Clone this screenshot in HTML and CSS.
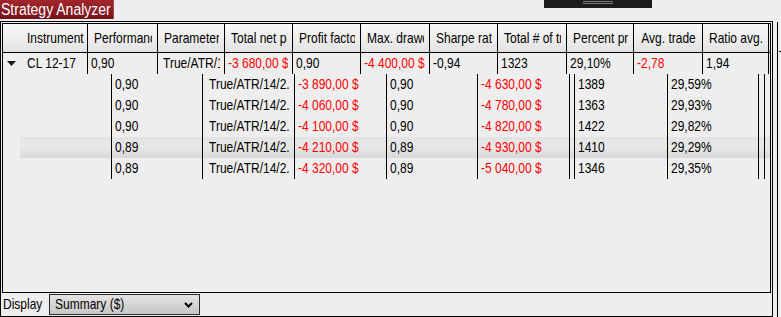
FILE: index.html
```html
<!DOCTYPE html>
<html>
<head>
<meta charset="utf-8">
<link rel="stylesheet" href="styles.css">
</head>
<body>
<div class="topbar">
  <div class="tab"><div class="tt">Strategy Analyzer</div></div>
  <div class="grip"><span></span><span></span></div>
</div>
<div class="main">
  <div class="panel">
    <div class="pane">
      <div class="head">
        <div class="c first"><div class="t">Instrument</div></div>
        <div class="c"><div class="t">Performance</div></div>
        <div class="c"><div class="t">Parameters</div></div>
        <div class="c"><div class="t">Total net profit</div></div>
        <div class="c"><div class="t">Profit factor</div></div>
        <div class="c"><div class="t">Max. drawdown</div></div>
        <div class="c"><div class="t">Sharpe ratio</div></div>
        <div class="c"><div class="t">Total # of trades</div></div>
        <div class="c"><div class="t">Percent profitable</div></div>
        <div class="c"><div class="t">Avg. trade</div></div>
        <div class="c"><div class="t">Ratio avg. win / avg. loss</div></div>
      </div>
      <div class="row1">
        <div class="c first"><svg class="tri" width="9" height="5" viewBox="0 0 9 5"><polygon points="0,0 9,0 4.5,5" fill="#1a1a1a"/></svg><div class="t">CL 12-17</div></div>
        <div class="c"><div class="t">0,90</div></div>
        <div class="c param"><div class="t">True/ATR/14/2.5/1</div></div>
        <div class="c"><div class="t neg">-3 680,00 $</div></div>
        <div class="c"><div class="t">0,90</div></div>
        <div class="c"><div class="t neg">-4 400,00 $</div></div>
        <div class="c"><div class="t">-0,94</div></div>
        <div class="c"><div class="t">1323</div></div>
        <div class="c"><div class="t">29,10%</div></div>
        <div class="c"><div class="t neg">-2,78</div></div>
        <div class="c"><div class="t">1,94</div></div>
      </div>
      <div class="kids">
        <div class="kid">
          <div class="c"></div>
          <div class="c"><div class="t">0,90</div></div>
          <div class="c param"><div class="t">True/ATR/14/2.</div></div>
          <div class="c"><div class="t neg">-3 890,00 $</div></div>
          <div class="c"><div class="t">0,90</div></div>
          <div class="c"><div class="t neg">-4 630,00 $</div></div>
          <div class="c"></div>
          <div class="c"><div class="t">1389</div></div>
          <div class="c"><div class="t">29,59%</div></div>
          <div class="c"></div>
          <div class="c end"></div>
        </div>
        <div class="kid">
          <div class="c"></div>
          <div class="c"><div class="t">0,90</div></div>
          <div class="c param"><div class="t">True/ATR/14/2.</div></div>
          <div class="c"><div class="t neg">-4 060,00 $</div></div>
          <div class="c"><div class="t">0,90</div></div>
          <div class="c"><div class="t neg">-4 780,00 $</div></div>
          <div class="c"></div>
          <div class="c"><div class="t">1363</div></div>
          <div class="c"><div class="t">29,93%</div></div>
          <div class="c"></div>
          <div class="c end"></div>
        </div>
        <div class="kid">
          <div class="c"></div>
          <div class="c"><div class="t">0,90</div></div>
          <div class="c param"><div class="t">True/ATR/14/2.</div></div>
          <div class="c"><div class="t neg">-4 100,00 $</div></div>
          <div class="c"><div class="t">0,90</div></div>
          <div class="c"><div class="t neg">-4 820,00 $</div></div>
          <div class="c"></div>
          <div class="c"><div class="t">1422</div></div>
          <div class="c"><div class="t">29,82%</div></div>
          <div class="c"></div>
          <div class="c end"></div>
        </div>
        <div class="kid sel">
          <div class="c"></div>
          <div class="c"><div class="t">0,89</div></div>
          <div class="c param"><div class="t">True/ATR/14/2.</div></div>
          <div class="c"><div class="t neg">-4 210,00 $</div></div>
          <div class="c"><div class="t">0,89</div></div>
          <div class="c"><div class="t neg">-4 930,00 $</div></div>
          <div class="c"></div>
          <div class="c"><div class="t">1410</div></div>
          <div class="c"><div class="t">29,29%</div></div>
          <div class="c"></div>
          <div class="c end"></div>
        </div>
        <div class="kid">
          <div class="c"></div>
          <div class="c"><div class="t">0,89</div></div>
          <div class="c param"><div class="t">True/ATR/14/2.</div></div>
          <div class="c"><div class="t neg">-4 320,00 $</div></div>
          <div class="c"><div class="t">0,89</div></div>
          <div class="c"><div class="t neg">-5 040,00 $</div></div>
          <div class="c"></div>
          <div class="c"><div class="t">1346</div></div>
          <div class="c"><div class="t">29,35%</div></div>
          <div class="c"></div>
          <div class="c end"></div>
        </div>
      </div>
    </div>
    <div class="footer">
      <div class="label"><div class="t">Display</div></div>
      <div class="select">
        <div class="t">Summary ($)</div>
        <svg class="chev" width="9" height="6" viewBox="0 0 9 6"><polyline points="1,1 4.5,4.5 8,1" fill="none" stroke="#000" stroke-width="2"/></svg>
      </div>
    </div>
  </div>
  <div class="side"><div class="side-head"></div></div>
</div>
</body>
</html>
```

FILE: styles.css
```css
* { box-sizing: border-box; }

body {
  margin: 0;
  width: 781px;
  height: 317px;
  overflow: hidden;
  background: #eeeeee;
  font-family: "Liberation Sans", Arial, sans-serif;
  font-size: 12px;
  color: #000;
}

.t {
  overflow: hidden;
  white-space: nowrap;
  transform: scaleY(1.2);
}

.topbar {
  height: 21px;
  display: flex;
  align-items: flex-start;
}

.tab {
  width: 114px;
  height: 19px;
  padding-left: 1px;
  background: linear-gradient(#a3262c, #74121a);
  border-right: 1px solid #a4484d;
  color: #fff;
  font-size: 14px;
  line-height: 19px;
  white-space: nowrap;
  overflow: hidden;
}

.tt {
  transform: scaleY(1.22);
}

.grip {
  margin-left: 430px;
  width: 108px;
  height: 8px;
  background: #1c1c1c;
  display: flex;
  flex-direction: column;
  align-items: center;
  padding-top: 1px;
  gap: 1px;
}

.grip span {
  width: 30px;
  height: 1px;
  background: #7a7a7a;
}

.main {
  display: flex;
  height: 296px;
}

.panel {
  width: 773px;
  height: 296px;
  border: 1px solid #000;
  padding: 1px;
  display: flex;
  flex-direction: column;
}

.pane {
  height: 270px;
  border: 1px solid #000;
  overflow: hidden;
}

.head {
  display: grid;
  grid-template-columns: 85px 70px 67px 68px 68px 69px 68px 69px 67px 69px 66px;
  height: 29px;
  border-bottom: 1px solid #000;
  background: linear-gradient(#f8f8f8, #ececec 60%, #e2e2e2);
}

.head .c {
  border-right: 1px solid #000;
  padding: 0 5px 0 6px;
  line-height: 28px;
}

.head .c.first {
  padding: 0 3px 0 24px;
}

.head .t {
  text-align: center;
}

.head .first .t {
  text-align: left;
}

.row1 {
  display: grid;
  grid-template-columns: 85px 70px 67px 68px 68px 69px 68px 69px 67px 69px 66px;
  height: 21px;
  line-height: 21px;
}

.row1 .c {
  border-right: 1px solid #000;
  padding: 0 4px 0 3px;
}

.row1 .c.param {
  padding-left: 5px;
}

.row1 .c.first {
  display: flex;
  align-items: center;
  padding-left: 4px;
}

.tri {
  flex: none;
  margin-right: 11px;
}

.neg {
  color: #ff0000;
}

.kids {
  padding-left: 17px;
}

.kid {
  display: grid;
  grid-template-columns: 92px 91px 92px 92px 91px 92px 5px 93px 91px 6px 1fr;
  height: 21px;
  line-height: 21px;
}

.kid .c {
  border-right: 1px solid #000;
  padding-left: 3px;
  overflow: hidden;
}

.kid .c.param {
  padding-left: 6px;
}

.kid .c.end {
  border-right: none;
}

.kid.sel {
  background: linear-gradient(#e3e3e3, #e8e8e8 45%, #d8d8d8);
}

.footer {
  height: 22px;
  display: flex;
  align-items: flex-start;
}

.label {
  width: 47px;
  line-height: 22px;
  padding-left: 1px;
}

.select {
  margin-top: 1px;
  width: 151px;
  height: 21px;
  border: 1px solid #2a2a2a;
  background: linear-gradient(#e4e4e4, #c6c6c6);
  display: flex;
  align-items: center;
  justify-content: space-between;
  padding: 0 6px 0 5px;
  line-height: 19px;
}

.chev {
  display: block;
}

.side {
  flex: 1;
  margin-left: 4px;
  margin-top: 1px;
  border-left: 1px solid #000;
}

.side-head {
  height: 30px;
  margin-left: 1px;
  border-bottom: 1px solid #000;
}
```
